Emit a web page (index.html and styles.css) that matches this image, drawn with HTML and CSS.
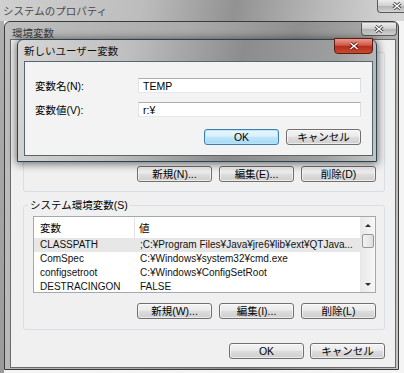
FILE: index.html
```html
<!DOCTYPE html>
<html lang="ja">
<head>
  <meta charset="UTF-8" />
  <title>環境変数</title>
  <meta name="viewport" content="width=device-width, initial-scale=1" />
  <link rel="stylesheet" href="styles.css">
</head>
<body>

<div class="desktop">
  <div class="outer-bar">
    <span class="outer-title">システムのプロパティ</span>
    <span class="close close-outer">
      <svg width="10" height="8" viewBox="0 0 10 8"><path d="M1.5 1 L8.5 7 M8.5 1 L1.5 7" stroke="#3a3a3a" stroke-width="3"/><path d="M1.5 1 L8.5 7 M8.5 1 L1.5 7" stroke="#fff" stroke-width="1.5"/></svg>
    </span>
  </div>

  <div class="outer-body">
    <div class="env">
      <div class="env-bar">
        <span class="env-title">環境変数</span>
        <span class="close close-env">
          <svg width="10" height="8" viewBox="0 0 10 8"><path d="M1.5 1 L8.5 7 M8.5 1 L1.5 7" stroke="#3a3a3a" stroke-width="3"/><path d="M1.5 1 L8.5 7 M8.5 1 L1.5 7" stroke="#fff" stroke-width="1.5"/></svg>
        </span>
      </div>

      <div class="env-client">
        <!-- user variables group: mostly hidden under the dialog -->
        <div class="group group-user">
          <div class="list list-user"></div>
          <div class="btn-row">
            <button class="btn">新規(N)...</button>
            <button class="btn">編集(E)...</button>
            <button class="btn">削除(D)</button>
          </div>
        </div>

        <fieldset class="group group-sys">
          <legend>システム環境変数(S)</legend>
          <div class="list">
            <div class="list-view">
              <div class="list-head"><span class="col-name">変数</span><span class="col-value">値</span></div>
              <div class="list-row selected"><span class="col-name">CLASSPATH</span><span class="col-value">;C:¥Program Files¥Java¥jre6¥lib¥ext¥QTJava...</span></div>
              <div class="list-row"><span class="col-name">ComSpec</span><span class="col-value">C:¥Windows¥system32¥cmd.exe</span></div>
              <div class="list-row"><span class="col-name">configsetroot</span><span class="col-value">C:¥Windows¥ConfigSetRoot</span></div>
              <div class="list-row"><span class="col-name">DESTRACINGON</span><span class="col-value">FALSE</span></div>
            </div>
            <div class="scrollbar">
              <span class="sb-btn"><span class="arrow-up"></span></span>
              <span class="thumb"></span>
              <span class="sb-space"></span>
              <span class="sb-btn"><span class="arrow-down"></span></span>
            </div>
          </div>
          <div class="btn-row">
            <button class="btn">新規(W)...</button>
            <button class="btn">編集(I)...</button>
            <button class="btn">削除(L)</button>
          </div>
        </fieldset>

        <div class="btn-row dialog-btns">
          <button class="btn">OK</button>
          <button class="btn">キャンセル</button>
        </div>
      </div>
    </div>
  </div>

  <div class="newvar">
    <div class="newvar-bar">
      <span class="newvar-title">新しいユーザー変数</span>
      <span class="close close-red">
        <svg width="10" height="8" viewBox="0 0 10 8"><path d="M1.5 1 L8.5 7 M8.5 1 L1.5 7" stroke="#5a160c" stroke-width="3"/><path d="M1.5 1 L8.5 7 M8.5 1 L1.5 7" stroke="#fff" stroke-width="1.5"/></svg>
      </span>
    </div>
    <div class="newvar-client">
      <div class="field-grid">
        <label for="varName">変数名(N):</label>
        <input type="text" id="varName" value="TEMP" />
        <label for="varValue">変数値(V):</label>
        <input type="text" id="varValue" value="r:¥" />
      </div>
      <div class="btn-row newvar-btns">
        <button class="btn btn-default">OK</button>
        <button class="btn">キャンセル</button>
      </div>
    </div>
  </div>
</div>

</body>
</html>
```

FILE: styles.css
```css
* {
  box-sizing: border-box;
}
body {
  margin: 0;
  font-family: "Liberation Sans", "Noto Sans CJK JP", sans-serif;
  color: #000;
}
.desktop {
  position: relative;
  width: 404px;
  height: 373px;
  overflow: hidden;
  background: linear-gradient(to bottom, #b0b0b0, #9a9a9a);
  display: flex;
  flex-direction: column;
}

/* outer window: システムのプロパティ */
.outer-bar {
  height: 21px;
  flex-shrink: 0;
  display: flex;
  justify-content: space-between;
  align-items: flex-start;
  background: linear-gradient(100deg, #d0d0d0 0%, #bdbdbd 35%, #929292 58%, #bababa 80%, #d8d8d8 100%);
}
.outer-title {
  font-family: "Noto Sans CJK JP", sans-serif;
  font-size: 10.5px;
  line-height: 13px;
  padding: 4px 0 0 3px;
  color: #4a4a4a;
}
.outer-body {
  flex: 1;
  margin-left: 4px;
  background: #f4f4f4;
}

/* close buttons */
.close {
  display: flex;
  align-items: center;
  justify-content: center;
  border: 1px solid #5a5a5a;
  border-top: none;
  border-radius: 0 0 4px 4px;
  background: linear-gradient(#ececec, #cfcfcf 50%, #b4b4b4 51%, #d2d2d2);
}
.close-outer {
  width: 40px;
  height: 13px;
  margin-right: -13px;
}
.close-env {
  width: 36px;
  height: 13px;
  margin: 1px 1px 0 0;
}
.close-red {
  width: 39px;
  height: 16px;
  align-self: flex-start;
  margin: -2px 3px 0 0;
  border: 1px solid #5a1d14;
  border-radius: 0 0 4px 4px;
  background: linear-gradient(#e69a8c, #d2584a 45%, #b32e1c 52%, #c84a30);
}

/* 環境変数 window */
.env {
  width: 395px;
  height: 349px;
  border: 1px solid #3b3b3b;
  border-radius: 6px 6px 0 0;
  background: linear-gradient(100deg, #bfbfbf 0%, #ababab 40%, #8f8f8f 65%, #b2b2b2 88%, #c6c6c6 100%);
  display: flex;
  flex-direction: column;
}
.env-bar {
  height: 17px;
  flex-shrink: 0;
  display: flex;
  justify-content: space-between;
  align-items: flex-start;
}
.env-title {
  font-family: "Noto Sans CJK JP", sans-serif;
  font-size: 10.5px;
  line-height: 12px;
  padding: 5px 0 0 7px;
  color: #3c3c3c;
}
.env-client {
  flex: 1;
  margin: 0 2px 2px 5px;
  border: 1px solid #6b6b6b;
  background: #f0f0f0;
  padding: 6px 10px 8px 12px;
  display: flex;
  flex-direction: column;
}

.group {
  margin: 0;
  min-width: 0;
  padding: 5px 8px 9px 9px;
  border: 1px solid #d5dfe5;
  border-radius: 3px;
}
.group legend {
  font-family: "Liberation Sans", "Noto Sans CJK JP", sans-serif;
  font-size: 10.5px;
  line-height: 12px;
  padding: 0 2px;
  margin-left: -5px;
}
.group-user {
  margin-top: 6px;
  padding-top: 10px;
}
.group-sys {
  margin-top: 7px;
  padding-bottom: 10px;
}

/* list view */
.list {
  display: flex;
  height: 77px;
  border: 1px solid #a3a9b1;
  background: #fff;
}
.list-user {
  height: 93px;
}
.list-view {
  flex: 1;
  overflow: hidden;
}
.list-head {
  display: flex;
  height: 21px;
  font-size: 10.5px;
}
.list-head .col-name {
  display: flex;
  align-items: center;
  border-right: 1px solid #e3e3e3;
}
.list-head .col-value {
  display: flex;
  align-items: center;
  padding-left: 4px;
}
.list-row {
  display: flex;
  height: 14px;
  align-items: center;
  font-size: 10px;
  line-height: 14px;
  white-space: nowrap;
  color: #111;
}
.list-row.selected {
  background: #e7e7e7;
}
.col-name {
  width: 101px;
  flex-shrink: 0;
  padding-left: 6px;
}
.col-value {
  padding-left: 5px;
  overflow: hidden;
}

.scrollbar {
  width: 15px;
  display: flex;
  flex-direction: column;
  align-items: center;
  background: linear-gradient(to right, #e8e8e8, #f7f7f7);
}
.sb-btn {
  width: 15px;
  height: 16px;
  flex-shrink: 0;
  display: flex;
  align-items: center;
  justify-content: center;
}
.arrow-up {
  border-left: 3px solid transparent;
  border-right: 3px solid transparent;
  border-bottom: 3px solid #2c2c2c;
}
.arrow-down {
  border-left: 3px solid transparent;
  border-right: 3px solid transparent;
  border-top: 3px solid #2c2c2c;
}
.thumb {
  width: 12px;
  height: 14px;
  margin-top: 1px;
  border: 1px solid #979797;
  border-radius: 2px;
  background: linear-gradient(to right, #f4f4f4, #dedede);
}
.sb-space {
  flex: 1;
}

/* buttons */
.btn-row {
  display: flex;
  justify-content: flex-end;
  gap: 7px;
  margin-top: 10px;
}
.dialog-btns {
  margin-top: 13px;
  gap: 6px;
}
.btn {
  width: 75px;
  height: 16px;
  padding: 0;
  border: 1px solid #707070;
  border-radius: 3px;
  background: linear-gradient(#f3f3f3, #ebebeb 45%, #dddddd 50%, #cfcfcf);
  box-shadow: inset 0 0 0 1px rgba(255, 255, 255, 0.6);
  font-family: "Liberation Sans", "Noto Sans CJK JP", sans-serif;
  font-size: 10.5px;
  line-height: 14px;
  color: #000;
}
.btn-default {
  border-color: #3c7fb1;
  background: linear-gradient(#eaf6fd, #d9f0fc 45%, #bee6fd 50%, #a7d9f5);
  box-shadow: inset 0 0 0 1px #b9e5f8;
}

/* 新しいユーザー変数 dialog */
.newvar {
  position: absolute;
  left: 17px;
  top: 39px;
  width: 360px;
  height: 123px;
  border: 1px solid #2c4350;
  border-radius: 6px 6px 0 0;
  background: linear-gradient(100deg, #d6d6d6 0%, #bebebe 30%, #8c8c8c 60%, #9f9f9f 85%, #c4c4c4 100%);
  box-shadow: 0 1px 8px 1px rgba(0, 0, 0, 0.55);
  display: flex;
  flex-direction: column;
}
.newvar-bar {
  height: 21px;
  flex-shrink: 0;
  display: flex;
  justify-content: space-between;
  align-items: center;
}
.newvar-title {
  padding-left: 6px;
  font-family: "Noto Sans CJK JP", sans-serif;
  font-size: 10.5px;
  color: #111;
}
.newvar-client {
  flex: 1;
  margin: 0 3px 5px 6px;
  border: 1px solid #56656e;
  background: #f3f3f3;
  padding: 16px 11px 10px 10px;
}
.field-grid {
  display: grid;
  grid-template-columns: 103px 1fr;
  row-gap: 9px;
  align-items: center;
}
.field-grid label {
  font-size: 10.5px;
  line-height: 12px;
}
.field-grid input {
  width: 100%;
  height: 15px;
  margin: 0;
  padding: 0 0 0 4px;
  border: 1px solid #abadb3;
  border-color: #abadb3 #dbdfe6 #e3e9ef #e2e3ea;
  background: #fff;
  font-family: "Liberation Sans", sans-serif;
  font-size: 10.5px;
  color: #000;
}
.newvar-btns {
  margin-top: 12px;
}
```
